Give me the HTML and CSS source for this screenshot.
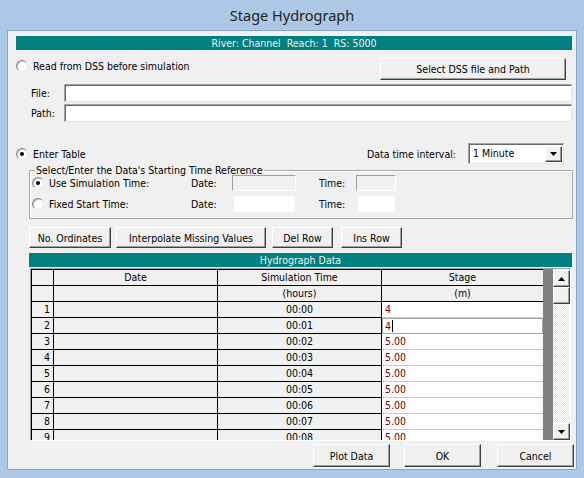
FILE: index.html
```html
<!DOCTYPE html>
<html>
<head>
<meta charset="utf-8">
<title>Stage Hydrograph</title>
<link rel="stylesheet" href="styles.css">
</head>
<body>
<div class="window">
  <div class="titlebar">Stage Hydrograph</div>
  <div class="client">
    <div class="banner banner-top">River: Channel  Reach: 1  RS: 5000</div>

    <div class="dss-row">
      <div class="radio radio-top"><span class="rb"></span><span>Read from DSS before simulation</span></div>
      <div class="btn btn-dss">Select DSS file and Path</div>
    </div>

    <div class="field-row field-first"><span class="flabel">File:</span><div class="input"></div></div>
    <div class="field-row field-second"><span class="flabel">Path:</span><div class="input"></div></div>

    <div class="enter-row">
      <div class="radio"><span class="rb on"></span><span>Enter Table</span></div>
      <div class="interval">
        <span>Data time interval:</span>
        <div class="combo">
          <span class="combo-text">1 Minute</span>
          <span class="combo-btn"><svg width="7" height="4" viewBox="0 0 7 4"><path d="M0 0h7L3.5 4z" fill="#000"/></svg></span>
        </div>
      </div>
    </div>

    <div class="group">
      <div class="legend">Select/Enter the Data's Starting Time Reference</div>
      <div class="grow grow-1">
        <div class="radio"><span class="rb on"></span><span>Use Simulation Time:</span></div>
        <span>Date:</span>
        <span class="box box-dis"></span>
        <span></span>
        <span>Time:</span>
        <span class="box box-dis"></span>
      </div>
      <div class="grow grow-2">
        <div class="radio"><span class="rb"></span><span>Fixed Start Time:</span></div>
        <span>Date:</span>
        <span class="box box-white"></span>
        <span></span>
        <span>Time:</span>
        <span class="box box-white"></span>
      </div>
    </div>

    <div class="btn-row">
      <div class="btn b-ord">No. Ordinates</div>
      <div class="btn b-int">Interpolate Missing Values</div>
      <div class="btn b-del">Del Row</div>
      <div class="btn b-ins">Ins Row</div>
    </div>

    <div class="banner banner-hydro">Hydrograph Data</div>

    <div class="grid-wrap">
      <div class="grid">
        <div class="tr">
          <div class="td c0"></div><div class="td c1 ctr">Date</div><div class="td c2">Simulation Time</div><div class="td c3">Stage</div>
        </div>
        <div class="tr">
          <div class="td c0"></div><div class="td c1"></div><div class="td c2">(hours)</div><div class="td c3">(m)</div>
        </div>
        <div class="tr">
          <div class="td c0">1</div><div class="td c1"></div><div class="td c2">00:00</div><div class="td c3 val">4</div>
        </div>
        <div class="tr">
          <div class="td c0">2</div><div class="td c1"></div><div class="td c2">00:01</div><div class="td c3 val edit"><span>4</span><span class="caret"></span></div>
        </div>
        <div class="tr">
          <div class="td c0">3</div><div class="td c1"></div><div class="td c2">00:02</div><div class="td c3 val">5.00</div>
        </div>
        <div class="tr">
          <div class="td c0">4</div><div class="td c1"></div><div class="td c2">00:03</div><div class="td c3 val">5.00</div>
        </div>
        <div class="tr">
          <div class="td c0">5</div><div class="td c1"></div><div class="td c2">00:04</div><div class="td c3 val">5.00</div>
        </div>
        <div class="tr">
          <div class="td c0">6</div><div class="td c1"></div><div class="td c2">00:05</div><div class="td c3 val">5.00</div>
        </div>
        <div class="tr">
          <div class="td c0">7</div><div class="td c1"></div><div class="td c2">00:06</div><div class="td c3 val">5.00</div>
        </div>
        <div class="tr">
          <div class="td c0">8</div><div class="td c1"></div><div class="td c2">00:07</div><div class="td c3 val">5.00</div>
        </div>
        <div class="tr">
          <div class="td c0">9</div><div class="td c1"></div><div class="td c2">00:08</div><div class="td c3 val">5.00</div>
        </div>
      </div>
      <div class="filler"></div>
      <div class="sb">
        <div class="sb-btn"><svg width="7" height="4" viewBox="0 0 7 4"><path d="M0 4h7L3.5 0z" fill="#000"/></svg></div>
        <div class="sb-btn sb-thumb"></div>
        <div class="sb-track"></div>
        <div class="sb-btn"><svg width="7" height="4" viewBox="0 0 7 4"><path d="M0 0h7L3.5 4z" fill="#000"/></svg></div>
      </div>
    </div>

    <div class="bottom-row">
      <div class="btn b-plot">Plot Data</div>
      <div class="btn b-ok">OK</div>
      <div class="btn b-cancel">Cancel</div>
    </div>
  </div>
</div>
</body>
</html>
```

FILE: styles.css
```css
* { box-sizing: border-box; }
html, body { margin: 0; padding: 0; }
body {
  width: 584px;
  height: 478px;
  overflow: hidden;
  background: #adc8e6;
  font-family: "DejaVu Sans Condensed", "Liberation Sans", sans-serif;
  font-size: 10.5px;
  color: #000;
}
.window { width: 584px; height: 478px; display: flex; flex-direction: column; }
.titlebar {
  height: 30px;
  display: flex;
  align-items: center;
  justify-content: center;
  font-family: "Noto Sans", "Open Sans", sans-serif;
  font-size: 14.5px;
  color: #222;
}
.client {
  margin-left: 7px;
  width: 570px;
  height: 440px;
  border: 1px solid #8ea6c2;
  background: #f0f0f0;
  display: flex;
  flex-direction: column;
}

.banner {
  background: #008080;
  color: #f0f0f0;
  height: 14px;
  line-height: 14px;
  text-align: center;
  white-space: pre;
}
.banner-top { margin: 5px 0 0 8px; width: 556px; }
.banner-hydro { margin: 5px 0 0 21px; width: 543px; }

/* radio */
.radio { display: flex; align-items: center; white-space: nowrap; }
.rb {
  position: relative;
  flex: none;
  width: 12px;
  height: 12px;
  margin-right: 5px;
  border-radius: 50%;
  border: 1px solid;
  border-color: #8a8a8a #e8e8e8 #e8e8e8 #8a8a8a;
  background: #fff;
  box-shadow: inset 1px 1px 0 #c4c4c4;
}
.rb.on::after {
  content: "";
  position: absolute;
  left: 3px;
  top: 3px;
  width: 4px;
  height: 4px;
  border-radius: 50%;
  background: #000;
}

/* buttons */
.btn {
  display: flex;
  align-items: center;
  justify-content: center;
  white-space: nowrap;
  background: #f0f0f0;
  border: 1px solid;
  border-color: #fff #404040 #404040 #fff;
  box-shadow: inset -1px -1px 0 #a0a0a0;
}

.dss-row {
  display: flex;
  align-items: flex-start;
  justify-content: space-between;
  margin-top: 8px;
  height: 22px;
  padding-left: 8px;
  padding-right: 10px;
}
.radio-top { margin-top: 2px; }
.btn-dss { width: 186px; height: 22px; }

.field-row { display: flex; align-items: center; height: 18px; }
.field-first { margin-top: 4px; }
.field-second { margin-top: 2px; }
.flabel { width: 56px; padding-left: 23px; }
.input {
  width: 508px;
  height: 18px;
  background: #fff;
  border: 1px solid;
  border-color: #a0a0a0 #e3e3e3 #e3e3e3 #a0a0a0;
  box-shadow: inset 1px 1px 0 #696969;
}

.enter-row {
  display: flex;
  align-items: center;
  justify-content: space-between;
  margin-top: 21px;
  height: 21px;
  padding-left: 8px;
  padding-right: 12px;
}
.interval { display: flex; align-items: center; gap: 12px; }
.combo {
  width: 96px;
  height: 21px;
  display: flex;
  background: #fff;
  border: 1px solid;
  border-color: #a0a0a0 #e3e3e3 #e3e3e3 #a0a0a0;
  box-shadow: inset 1px 1px 0 #696969;
  padding: 2px 1px 1px 2px;
}
.combo-text { flex: 1; padding-left: 2px; line-height: 15px; }
.combo-btn {
  width: 17px;
  display: flex;
  align-items: center;
  justify-content: center;
  background: #f0f0f0;
  border: 1px solid;
  border-color: #fff #404040 #404040 #fff;
  box-shadow: inset -1px -1px 0 #a0a0a0;
}

.group {
  margin: 6px 0 0 21px;
  width: 544px;
  border: 1px solid #a8a8a8;
  box-shadow: inset 1px 1px 0 #fff;
  padding: 0 0 6px 2px;
}
.legend {
  display: table;
  margin: -7px 0 -6px 3px;
  padding: 0 1px;
  height: 13px;
  line-height: 13px;
  background: #f0f0f0;
}
.grow {
  display: grid;
  grid-template-columns: 159px 41px 64px 23px 37px 40px;
  align-items: center;
  height: 16px;
}
.grow-1 { margin-top: 4px; }
.grow-2 { margin-top: 5px; }
.box { height: 16px; }
.box-dis {
  border: 1px solid;
  border-color: #a0a0a0 #fff #fff #a0a0a0;
  background: #f0f0f0;
}
.box-white { background: #fff; margin-left: 2px; margin-right: 1px; }

.btn-row { display: flex; margin: 8px 0 0 21px; height: 21px; }
.b-ord { width: 82px; }
.b-int { width: 150px; margin-left: 5px; }
.b-del { width: 61px; margin-left: 6px; }
.b-ins { width: 61px; margin-left: 8px; }

/* grid */
.grid-wrap {
  margin: 1px 0 0 22px;
  width: 541px;
  height: 173px;
  display: flex;
  overflow: hidden;
  border: 1px solid;
  border-color: #a0a0a0 #fff #fff #a0a0a0;
}
.grid {
  flex: none;
  width: 512px;
  align-self: flex-start;
  border-left: 1px solid #000;
  border-top: 1px solid #000;
}
.tr { display: flex; height: 16px; }
.td {
  height: 16px;
  line-height: 15px;
  background: #f0f0f0;
  border-right: 1px solid #000;
  border-bottom: 1px solid #000;
  overflow: hidden;
  white-space: nowrap;
}
.c0 { width: 22px; text-align: right; padding-right: 3px; }
.c1 { width: 164px; }
.ctr { text-align: center; }
.c2 { width: 164px; text-align: center; }
.c3 { width: 161px; border-right: none; text-align: center; }
.val {
  background: #fff;
  color: #800000;
  text-align: left;
  padding-left: 3px;
  border-bottom-color: #c8c8c8;
}
.edit {
  display: flex;
  align-items: center;
  border: 1px solid #a8a8a8;
  padding-left: 2px;
}
.caret { width: 1px; height: 12px; background: #000; margin-left: 1px; }
.filler { flex: none; width: 10px; background: #808080; }
.sb { flex: none; width: 17px; display: flex; flex-direction: column; padding-top: 1px; }
.sb-btn {
  flex: none;
  height: 17px;
  display: flex;
  align-items: center;
  justify-content: center;
  background: #f0f0f0;
  border: 1px solid;
  border-color: #fff #404040 #404040 #fff;
  box-shadow: inset -1px -1px 0 #a0a0a0;
}
.sb-track {
  flex: 1;
  background: repeating-conic-gradient(#fff 0 25%, #e4e4e4 0 50%) 0 0 / 2px 2px;
}

.bottom-row {
  display: flex;
  justify-content: flex-end;
  margin-top: 3px;
  height: 23px;
  padding-right: 2px;
}
.b-plot { width: 77px; }
.b-ok { width: 77px; margin-left: 14px; }
.b-cancel { width: 77px; margin-left: 16px; }
```
